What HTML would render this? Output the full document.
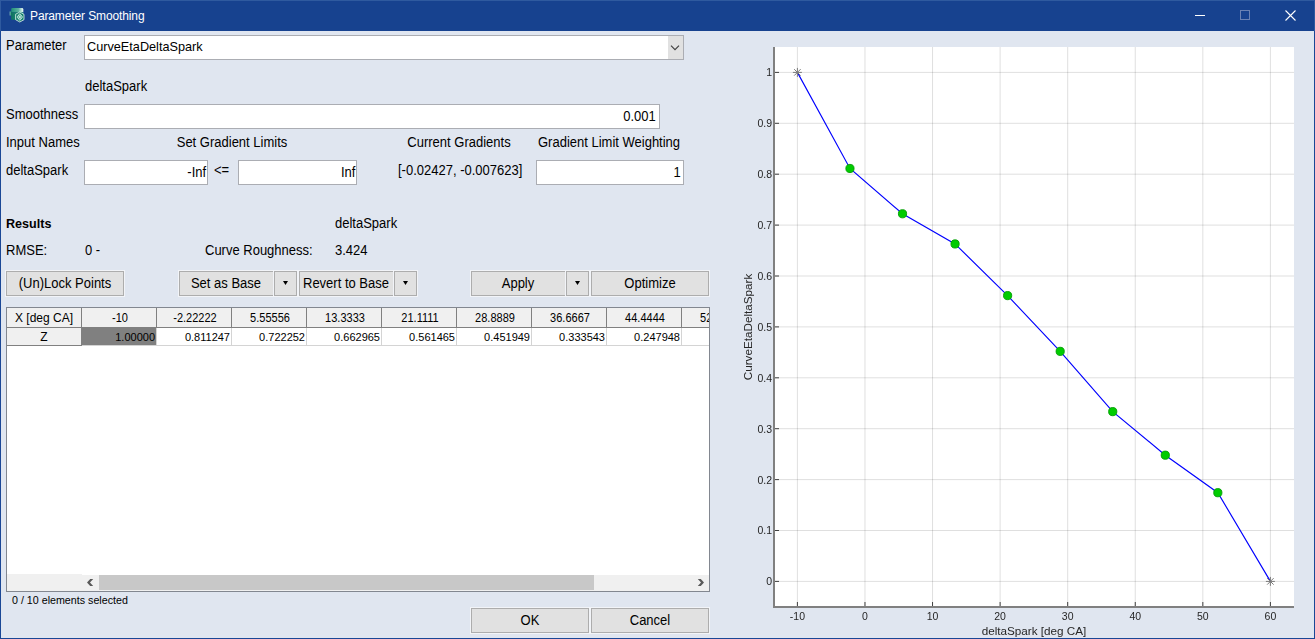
<!DOCTYPE html>
<html><head><meta charset="utf-8"><title>Parameter Smoothing</title>
<style>
html,body{margin:0;padding:0;width:1315px;height:639px;overflow:hidden;background:#e0e6f0;}
body{position:relative;font-family:"Liberation Sans", sans-serif;}
.b{position:absolute;box-sizing:content-box;}
.t{position:absolute;white-space:nowrap;font-family:"Liberation Sans", sans-serif;}
</style></head><body>
<div class="b" style="left:0px;top:0px;width:1315px;height:31px;background:#17428f;"></div>
<div class="b" style="left:0px;top:31px;width:1315px;height:608px;background:#e0e6f0;"></div>
<div class="b" style="left:0px;top:0px;width:1px;height:639px;background:#1a4796;"></div>
<div class="b" style="left:1314px;top:0px;width:1px;height:639px;background:#1a4796;"></div>
<div class="b" style="left:0px;top:638px;width:1315px;height:1px;background:#1a4796;"></div>
<div class="b" style="left:0px;top:0px;width:1315px;height:1px;background:#2f5a9f;"></div>
<div class="b" style="left:0px;top:0px;width:1px;height:31px;background:#2f5a9f;"></div>
<div class="b" style="left:1314px;top:0px;width:1px;height:31px;background:#2f5a9f;"></div>
<svg class="b" style="left:9px;top:7px" width="17" height="17" viewBox="0 0 17 17">
<defs>
<linearGradient id="g1" x1="0" y1="0" x2="1" y2="0"><stop offset="0" stop-color="#1f8f78"/><stop offset="0.6" stop-color="#5fb3a0"/><stop offset="1" stop-color="#f2fbf8"/></linearGradient>
<linearGradient id="g2" x1="0" y1="0" x2="1" y2="0"><stop offset="0" stop-color="#0c6f5c"/><stop offset="1" stop-color="#2a9a84"/></linearGradient>
</defs>
<path d="M2.2 2 Q2.2 1 3.4 1 L13 1 Q14.3 1 14.3 2.3 L14.3 5.2 L2.2 5.2 Z" fill="url(#g1)"/>
<path d="M2.2 5.2 L14.3 5.2 L14.3 12.7 L2.2 12.7 L2.2 8.5 L1.1 8.5 L1.1 4.3 L2.2 4.3 Z" fill="url(#g2)"/>
<path d="M1.1 4.5 L1.1 8.5" stroke="#8fd1c2" stroke-width="0.8"/>
<polygon points="10.8,5 15,7.3 15,12.7 10.8,15 6.6,12.7 6.6,7.3" fill="#18836d" stroke="#eef8f5" stroke-width="0.75"/>
<polygon points="10.8,6.6 13.6,10 10.8,13.4 8,10" fill="#5fb5a2" stroke="#f4fbf9" stroke-width="0.6"/>
<path d="M9.4 8.3 L12.2 11.7 M12.2 8.3 L9.4 11.7" stroke="#f4fbf9" stroke-width="0.6"/>
</svg>
<div class="t" style="left:30px;top:9.34px;font-size:12.00px;line-height:15px;color:#fff;font-weight:normal;transform-origin:0 0;letter-spacing:-0.12px;">Parameter Smoothing</div>
<div class="b" style="left:1195px;top:15px;width:10px;height:1px;background:#fff;"></div>
<div class="b" style="left:1240px;top:10px;width:8px;height:8px;border:1px solid #6a82b4;"></div>
<svg class="b" style="left:1285px;top:10px" width="11" height="11" viewBox="0 0 11 11"><path d="M0.5 0.5 L10.5 10.5 M10.5 0.5 L0.5 10.5" stroke="#fff" stroke-width="1.1"/></svg>
<div class="t" style="left:6px;top:36.68px;font-size:13.91px;line-height:17px;color:#000;font-weight:normal;transform:scaleX(0.9346);transform-origin:0 0;">Parameter</div>
<div class="b" style="left:84px;top:35px;width:598px;height:23px;background:#fff;border:1px solid #abadb3;"></div>
<div class="b" style="left:668px;top:36px;width:15px;height:23px;background:#e1e1e1;"></div>
<svg class="b" style="left:670px;top:44px" width="10" height="8" viewBox="0 0 10 8"><path d="M1 1.6 L5 5.6 L9 1.6" fill="none" stroke="#404040" stroke-width="1.15"/></svg>
<div class="t" style="left:87px;top:38.29px;font-size:13.59px;line-height:17px;color:#000;font-weight:normal;transform:scaleX(0.9346);transform-origin:0 0;">CurveEtaDeltaSpark</div>
<div class="t" style="left:85px;top:77.68px;font-size:13.91px;line-height:17px;color:#000;font-weight:normal;transform:scaleX(0.9346);transform-origin:0 0;">deltaSpark</div>
<div class="t" style="left:6px;top:105.68px;font-size:13.91px;line-height:17px;color:#000;font-weight:normal;transform:scaleX(0.9346);transform-origin:0 0;">Smoothness</div>
<div class="b" style="left:84px;top:104px;width:574px;height:23px;background:#fff;border:1px solid #abadb3;"></div>
<div class="t" style="right:659px;top:107.68px;font-size:13.91px;line-height:17px;color:#000;font-weight:normal;transform:scaleX(0.9346);transform-origin:100% 0;">0.001</div>
<div class="t" style="left:6px;top:133.68px;font-size:13.91px;line-height:17px;color:#000;font-weight:normal;transform:scaleX(0.9346);transform-origin:0 0;">Input Names</div>
<div class="t" style="left:32px;width:400px;text-align:center;top:133.68px;font-size:13.91px;line-height:17px;color:#000;font-weight:normal;transform:scaleX(0.9346);transform-origin:50% 0;">Set Gradient Limits</div>
<div class="t" style="left:259px;width:400px;text-align:center;top:133.68px;font-size:13.91px;line-height:17px;color:#000;font-weight:normal;transform:scaleX(0.9346);transform-origin:50% 0;">Current Gradients</div>
<div class="t" style="left:538px;top:133.68px;font-size:13.91px;line-height:17px;color:#000;font-weight:normal;transform:scaleX(0.9346);transform-origin:0 0;">Gradient Limit Weighting</div>
<div class="t" style="left:6px;top:161.68px;font-size:13.91px;line-height:17px;color:#000;font-weight:normal;transform:scaleX(0.9346);transform-origin:0 0;">deltaSpark</div>
<div class="b" style="left:84px;top:160px;width:122px;height:23px;background:#fff;border:1px solid #abadb3;"></div>
<div class="t" style="right:1109px;top:163.68px;font-size:13.91px;line-height:17px;color:#000;font-weight:normal;transform:scaleX(0.9346);transform-origin:100% 0;">-Inf</div>
<div class="t" style="left:214px;top:161.68px;font-size:13.91px;line-height:17px;color:#000;font-weight:normal;transform:scaleX(0.9346);transform-origin:0 0;">&lt;=</div>
<div class="b" style="left:238px;top:160px;width:117px;height:23px;background:#fff;border:1px solid #abadb3;"></div>
<div class="t" style="right:960px;top:163.68px;font-size:13.91px;line-height:17px;color:#000;font-weight:normal;transform:scaleX(0.9346);transform-origin:100% 0;">Inf</div>
<div class="t" style="left:398px;top:161.68px;font-size:13.91px;line-height:17px;color:#000;font-weight:normal;transform:scaleX(0.9346);transform-origin:0 0;">[-0.02427, -0.007623]</div>
<div class="b" style="left:536px;top:160px;width:146px;height:23px;background:#fff;border:1px solid #abadb3;"></div>
<div class="t" style="right:634px;top:163.68px;font-size:13.91px;line-height:17px;color:#000;font-weight:normal;transform:scaleX(0.9346);transform-origin:100% 0;">1</div>
<div class="t" style="left:6px;top:214.83px;font-size:13.48px;line-height:17px;color:#000;font-weight:bold;transform:scaleX(0.9346);transform-origin:0 0;">Results</div>
<div class="t" style="left:335px;top:214.68px;font-size:13.91px;line-height:17px;color:#000;font-weight:normal;transform:scaleX(0.9346);transform-origin:0 0;">deltaSpark</div>
<div class="t" style="left:6px;top:241.68px;font-size:13.91px;line-height:17px;color:#000;font-weight:normal;transform:scaleX(0.9346);transform-origin:0 0;">RMSE:</div>
<div class="t" style="left:85px;top:241.68px;font-size:13.91px;line-height:17px;color:#000;font-weight:normal;transform:scaleX(0.9346);transform-origin:0 0;">0 -</div>
<div class="t" style="left:205px;top:241.68px;font-size:13.91px;line-height:17px;color:#000;font-weight:normal;transform:scaleX(0.9346);transform-origin:0 0;">Curve Roughness:</div>
<div class="t" style="left:335px;top:241.68px;font-size:13.91px;line-height:17px;color:#000;font-weight:normal;transform:scaleX(0.9346);transform-origin:0 0;">3.424</div>
<div class="b" style="left:6px;top:271px;width:116px;height:23px;background:#e1e1e1;border:1px solid #adadad;box-shadow:0 0 0 1px #f2f4f8;"></div>
<div class="t" style="left:-135.0px;width:400px;text-align:center;top:274.68px;font-size:13.91px;line-height:17px;color:#000;font-weight:normal;transform:scaleX(0.9346);transform-origin:50% 0;">(Un)Lock Points</div>
<div class="b" style="left:179px;top:271px;width:93px;height:23px;background:#e1e1e1;border:1px solid #adadad;border-right:0;box-shadow:0 0 0 1px #f2f4f8;"></div>
<div class="t" style="left:26.0px;width:400px;text-align:center;top:274.68px;font-size:13.91px;line-height:17px;color:#000;font-weight:normal;transform:scaleX(0.9346);transform-origin:50% 0;">Set as Base</div>
<div class="b" style="left:274px;top:271px;width:21px;height:23px;background:#e1e1e1;border:1px solid #adadad;box-shadow:0 0 0 1px #f2f4f8;"></div>
<svg class="b" style="left:283.0px;top:281.0px" width="5" height="4" viewBox="0 0 5 4"><path d="M0 0 L5 0 L2.5 4 Z" fill="#000"/></svg>
<div class="b" style="left:299px;top:271px;width:93px;height:23px;background:#e1e1e1;border:1px solid #adadad;border-right:0;box-shadow:0 0 0 1px #f2f4f8;"></div>
<div class="t" style="left:146.0px;width:400px;text-align:center;top:274.68px;font-size:13.91px;line-height:17px;color:#000;font-weight:normal;transform:scaleX(0.9346);transform-origin:50% 0;">Revert to Base</div>
<div class="b" style="left:394px;top:271px;width:21px;height:23px;background:#e1e1e1;border:1px solid #adadad;box-shadow:0 0 0 1px #f2f4f8;"></div>
<svg class="b" style="left:403.0px;top:281.0px" width="5" height="4" viewBox="0 0 5 4"><path d="M0 0 L5 0 L2.5 4 Z" fill="#000"/></svg>
<div class="b" style="left:471px;top:271px;width:93px;height:23px;background:#e1e1e1;border:1px solid #adadad;border-right:0;box-shadow:0 0 0 1px #f2f4f8;"></div>
<div class="t" style="left:318.0px;width:400px;text-align:center;top:274.68px;font-size:13.91px;line-height:17px;color:#000;font-weight:normal;transform:scaleX(0.9346);transform-origin:50% 0;">Apply</div>
<div class="b" style="left:566px;top:271px;width:21px;height:23px;background:#e1e1e1;border:1px solid #adadad;box-shadow:0 0 0 1px #f2f4f8;"></div>
<svg class="b" style="left:575.0px;top:281.0px" width="5" height="4" viewBox="0 0 5 4"><path d="M0 0 L5 0 L2.5 4 Z" fill="#000"/></svg>
<div class="b" style="left:591px;top:271px;width:116px;height:23px;background:#e1e1e1;border:1px solid #adadad;box-shadow:0 0 0 1px #f2f4f8;"></div>
<div class="t" style="left:450.0px;width:400px;text-align:center;top:274.68px;font-size:13.91px;line-height:17px;color:#000;font-weight:normal;transform:scaleX(0.9346);transform-origin:50% 0;">Optimize</div>
<div class="b" style="left:6px;top:307px;width:702px;height:283px;background:#fff;border:1px solid #828790;"></div>
<div class="b" style="left:7px;top:308px;width:702px;height:19px;background:#f0f0f0;"></div>
<div class="b" style="left:7px;top:327px;width:702px;height:1px;background:#808080;"></div>
<div class="b" style="left:7px;top:328px;width:74px;height:17px;background:#f0f0f0;"></div>
<div class="b" style="left:7px;top:345px;width:75px;height:1px;background:#808080;"></div>
<div class="b" style="left:81px;top:308px;width:1px;height:37px;background:#808080;"></div>
<div class="t" style="left:-156px;width:400px;text-align:center;top:311.34px;font-size:12.00px;line-height:15px;color:#000;font-weight:normal;transform-origin:50% 0;">X [deg CA]</div>
<div class="t" style="left:-156px;width:400px;text-align:center;top:330.34px;font-size:12.00px;line-height:15px;color:#000;font-weight:normal;transform-origin:50% 0;">Z</div>
<div class="b" style="left:7px;top:308px;width:702px;height:282px;overflow:hidden">
<div class="b" style="left:149px;top:0px;width:1px;height:19px;background:#808080"></div>
<div class="b" style="left:149px;top:20px;width:1px;height:17px;background:#d4d4d4"></div>
<div class="b" style="left:75px;top:37px;width:75px;height:1px;background:#d4d4d4"></div>
<div class="b" style="left:75px;top:20px;width:74px;height:17px;background:#808080"></div>
<div class="t" style="left:63px;width:100px;text-align:center;top:3.4000000000000004px;font-size:11.9px;line-height:15px;transform:scaleX(0.925);transform-origin:50% 0">-10</div>
<div class="t" style="left:74px;width:74px;text-align:right;top:21.5px;font-size:11px;line-height:14px">1.00000</div>
<div class="b" style="left:224px;top:0px;width:1px;height:19px;background:#808080"></div>
<div class="b" style="left:224px;top:20px;width:1px;height:17px;background:#d4d4d4"></div>
<div class="b" style="left:150px;top:37px;width:75px;height:1px;background:#d4d4d4"></div>
<div class="t" style="left:138px;width:100px;text-align:center;top:3.4000000000000004px;font-size:11.9px;line-height:15px;transform:scaleX(0.925);transform-origin:50% 0">-2.22222</div>
<div class="t" style="left:149px;width:74px;text-align:right;top:21.5px;font-size:11px;line-height:14px">0.811247</div>
<div class="b" style="left:299px;top:0px;width:1px;height:19px;background:#808080"></div>
<div class="b" style="left:299px;top:20px;width:1px;height:17px;background:#d4d4d4"></div>
<div class="b" style="left:225px;top:37px;width:75px;height:1px;background:#d4d4d4"></div>
<div class="t" style="left:213px;width:100px;text-align:center;top:3.4000000000000004px;font-size:11.9px;line-height:15px;transform:scaleX(0.925);transform-origin:50% 0">5.55556</div>
<div class="t" style="left:224px;width:74px;text-align:right;top:21.5px;font-size:11px;line-height:14px">0.722252</div>
<div class="b" style="left:374px;top:0px;width:1px;height:19px;background:#808080"></div>
<div class="b" style="left:374px;top:20px;width:1px;height:17px;background:#d4d4d4"></div>
<div class="b" style="left:300px;top:37px;width:75px;height:1px;background:#d4d4d4"></div>
<div class="t" style="left:288px;width:100px;text-align:center;top:3.4000000000000004px;font-size:11.9px;line-height:15px;transform:scaleX(0.925);transform-origin:50% 0">13.3333</div>
<div class="t" style="left:299px;width:74px;text-align:right;top:21.5px;font-size:11px;line-height:14px">0.662965</div>
<div class="b" style="left:449px;top:0px;width:1px;height:19px;background:#808080"></div>
<div class="b" style="left:449px;top:20px;width:1px;height:17px;background:#d4d4d4"></div>
<div class="b" style="left:375px;top:37px;width:75px;height:1px;background:#d4d4d4"></div>
<div class="t" style="left:363px;width:100px;text-align:center;top:3.4000000000000004px;font-size:11.9px;line-height:15px;transform:scaleX(0.925);transform-origin:50% 0">21.1111</div>
<div class="t" style="left:374px;width:74px;text-align:right;top:21.5px;font-size:11px;line-height:14px">0.561465</div>
<div class="b" style="left:524px;top:0px;width:1px;height:19px;background:#808080"></div>
<div class="b" style="left:524px;top:20px;width:1px;height:17px;background:#d4d4d4"></div>
<div class="b" style="left:450px;top:37px;width:75px;height:1px;background:#d4d4d4"></div>
<div class="t" style="left:438px;width:100px;text-align:center;top:3.4000000000000004px;font-size:11.9px;line-height:15px;transform:scaleX(0.925);transform-origin:50% 0">28.8889</div>
<div class="t" style="left:449px;width:74px;text-align:right;top:21.5px;font-size:11px;line-height:14px">0.451949</div>
<div class="b" style="left:599px;top:0px;width:1px;height:19px;background:#808080"></div>
<div class="b" style="left:599px;top:20px;width:1px;height:17px;background:#d4d4d4"></div>
<div class="b" style="left:525px;top:37px;width:75px;height:1px;background:#d4d4d4"></div>
<div class="t" style="left:513px;width:100px;text-align:center;top:3.4000000000000004px;font-size:11.9px;line-height:15px;transform:scaleX(0.925);transform-origin:50% 0">36.6667</div>
<div class="t" style="left:524px;width:74px;text-align:right;top:21.5px;font-size:11px;line-height:14px">0.333543</div>
<div class="b" style="left:674px;top:0px;width:1px;height:19px;background:#808080"></div>
<div class="b" style="left:674px;top:20px;width:1px;height:17px;background:#d4d4d4"></div>
<div class="b" style="left:600px;top:37px;width:75px;height:1px;background:#d4d4d4"></div>
<div class="t" style="left:588px;width:100px;text-align:center;top:3.4000000000000004px;font-size:11.9px;line-height:15px;transform:scaleX(0.925);transform-origin:50% 0">44.4444</div>
<div class="t" style="left:599px;width:74px;text-align:right;top:21.5px;font-size:11px;line-height:14px">0.247948</div>
<div class="b" style="left:749px;top:0px;width:1px;height:19px;background:#808080"></div>
<div class="b" style="left:749px;top:20px;width:1px;height:17px;background:#d4d4d4"></div>
<div class="b" style="left:675px;top:37px;width:75px;height:1px;background:#d4d4d4"></div>
<div class="t" style="left:663px;width:100px;text-align:center;top:3.4000000000000004px;font-size:11.9px;line-height:15px;transform:scaleX(0.925);transform-origin:50% 0">52.2222</div>
<div class="t" style="left:674px;width:74px;text-align:right;top:21.5px;font-size:11px;line-height:14px">0.174311</div>
</div>
<div class="b" style="left:7px;top:574px;width:75px;height:17px;background:#f0f0f0;"></div>
<div class="b" style="left:82px;top:575px;width:627px;height:16px;background:#f0f0f0;"></div>
<div class="b" style="left:99px;top:575px;width:495px;height:15px;background:#c8c8c8;"></div>
<svg class="b" style="left:86px;top:578px" width="8" height="9" viewBox="0 0 8 9"><polygon points="7.2,1 4.2,1 1,4.5 4.2,8 7.2,8 4,4.5" fill="#5a5a5a"/></svg>
<svg class="b" style="left:697px;top:578px" width="8" height="9" viewBox="0 0 8 9"><polygon points="0.8,1 3.8,1 7,4.5 3.8,8 0.8,8 4,4.5" fill="#5a5a5a"/></svg>
<div class="t" style="left:12px;top:593.79px;font-size:10.70px;line-height:13px;color:#000;font-weight:normal;transform-origin:0 0;">0 / 10 elements selected</div>
<div class="b" style="left:471px;top:608px;width:116px;height:23px;background:#e1e1e1;border:1px solid #adadad;box-shadow:0 0 0 1px #f2f4f8;"></div>
<div class="t" style="left:330.0px;width:400px;text-align:center;top:611.68px;font-size:13.91px;line-height:17px;color:#000;font-weight:normal;transform:scaleX(0.9346);transform-origin:50% 0;">OK</div>
<div class="b" style="left:591px;top:608px;width:116px;height:23px;background:#e1e1e1;border:1px solid #adadad;box-shadow:0 0 0 1px #f2f4f8;"></div>
<div class="t" style="left:450.0px;width:400px;text-align:center;top:611.68px;font-size:13.91px;line-height:17px;color:#000;font-weight:normal;transform:scaleX(0.9346);transform-origin:50% 0;">Cancel</div>
<svg class="b" style="left:0;top:0;will-change:transform" width="1315" height="639" viewBox="0 0 1315 639">
<rect x="775" y="47" width="519" height="559" fill="#fff"/>
<line x1="797.4" y1="47" x2="797.4" y2="606" stroke="#000" stroke-opacity="0.125" stroke-width="1"/>
<line x1="864.97" y1="47" x2="864.97" y2="606" stroke="#000" stroke-opacity="0.125" stroke-width="1"/>
<line x1="932.54" y1="47" x2="932.54" y2="606" stroke="#000" stroke-opacity="0.125" stroke-width="1"/>
<line x1="1000.11" y1="47" x2="1000.11" y2="606" stroke="#000" stroke-opacity="0.125" stroke-width="1"/>
<line x1="1067.69" y1="47" x2="1067.69" y2="606" stroke="#000" stroke-opacity="0.125" stroke-width="1"/>
<line x1="1135.26" y1="47" x2="1135.26" y2="606" stroke="#000" stroke-opacity="0.125" stroke-width="1"/>
<line x1="1202.83" y1="47" x2="1202.83" y2="606" stroke="#000" stroke-opacity="0.125" stroke-width="1"/>
<line x1="1270.4" y1="47" x2="1270.4" y2="606" stroke="#000" stroke-opacity="0.125" stroke-width="1"/>
<line x1="775" y1="581.4" x2="1294" y2="581.4" stroke="#000" stroke-opacity="0.125" stroke-width="1"/>
<line x1="775" y1="530.5" x2="1294" y2="530.5" stroke="#000" stroke-opacity="0.125" stroke-width="1"/>
<line x1="775" y1="479.6" x2="1294" y2="479.6" stroke="#000" stroke-opacity="0.125" stroke-width="1"/>
<line x1="775" y1="428.7" x2="1294" y2="428.7" stroke="#000" stroke-opacity="0.125" stroke-width="1"/>
<line x1="775" y1="377.8" x2="1294" y2="377.8" stroke="#000" stroke-opacity="0.125" stroke-width="1"/>
<line x1="775" y1="326.9" x2="1294" y2="326.9" stroke="#000" stroke-opacity="0.125" stroke-width="1"/>
<line x1="775" y1="276.0" x2="1294" y2="276.0" stroke="#000" stroke-opacity="0.125" stroke-width="1"/>
<line x1="775" y1="225.1" x2="1294" y2="225.1" stroke="#000" stroke-opacity="0.125" stroke-width="1"/>
<line x1="775" y1="174.2" x2="1294" y2="174.2" stroke="#000" stroke-opacity="0.125" stroke-width="1"/>
<line x1="775" y1="123.3" x2="1294" y2="123.3" stroke="#000" stroke-opacity="0.125" stroke-width="1"/>
<line x1="775" y1="72.4" x2="1294" y2="72.4" stroke="#000" stroke-opacity="0.125" stroke-width="1"/>
<rect x="773" y="47" width="2" height="561" fill="#808080"/>
<rect x="773" y="606" width="521" height="2" fill="#808080"/>
<line x1="797.4" y1="602" x2="797.4" y2="606" stroke="#404040" stroke-width="1"/>
<text x="797.4" y="620" font-size="10.5" fill="#262626" text-anchor="middle" font-family="Liberation Sans">-10</text>
<line x1="864.97" y1="602" x2="864.97" y2="606" stroke="#404040" stroke-width="1"/>
<text x="864.97" y="620" font-size="10.5" fill="#262626" text-anchor="middle" font-family="Liberation Sans">0</text>
<line x1="932.54" y1="602" x2="932.54" y2="606" stroke="#404040" stroke-width="1"/>
<text x="932.54" y="620" font-size="10.5" fill="#262626" text-anchor="middle" font-family="Liberation Sans">10</text>
<line x1="1000.11" y1="602" x2="1000.11" y2="606" stroke="#404040" stroke-width="1"/>
<text x="1000.11" y="620" font-size="10.5" fill="#262626" text-anchor="middle" font-family="Liberation Sans">20</text>
<line x1="1067.69" y1="602" x2="1067.69" y2="606" stroke="#404040" stroke-width="1"/>
<text x="1067.69" y="620" font-size="10.5" fill="#262626" text-anchor="middle" font-family="Liberation Sans">30</text>
<line x1="1135.26" y1="602" x2="1135.26" y2="606" stroke="#404040" stroke-width="1"/>
<text x="1135.26" y="620" font-size="10.5" fill="#262626" text-anchor="middle" font-family="Liberation Sans">40</text>
<line x1="1202.83" y1="602" x2="1202.83" y2="606" stroke="#404040" stroke-width="1"/>
<text x="1202.83" y="620" font-size="10.5" fill="#262626" text-anchor="middle" font-family="Liberation Sans">50</text>
<line x1="1270.4" y1="602" x2="1270.4" y2="606" stroke="#404040" stroke-width="1"/>
<text x="1270.4" y="620" font-size="10.5" fill="#262626" text-anchor="middle" font-family="Liberation Sans">60</text>
<line x1="775" y1="581.4" x2="779" y2="581.4" stroke="#404040" stroke-width="1"/>
<text x="772" y="585.30" font-size="10.5" fill="#262626" text-anchor="end" font-family="Liberation Sans">0</text>
<line x1="775" y1="530.5" x2="779" y2="530.5" stroke="#404040" stroke-width="1"/>
<text x="772" y="534.40" font-size="10.5" fill="#262626" text-anchor="end" font-family="Liberation Sans">0.1</text>
<line x1="775" y1="479.6" x2="779" y2="479.6" stroke="#404040" stroke-width="1"/>
<text x="772" y="483.50" font-size="10.5" fill="#262626" text-anchor="end" font-family="Liberation Sans">0.2</text>
<line x1="775" y1="428.7" x2="779" y2="428.7" stroke="#404040" stroke-width="1"/>
<text x="772" y="432.60" font-size="10.5" fill="#262626" text-anchor="end" font-family="Liberation Sans">0.3</text>
<line x1="775" y1="377.8" x2="779" y2="377.8" stroke="#404040" stroke-width="1"/>
<text x="772" y="381.70" font-size="10.5" fill="#262626" text-anchor="end" font-family="Liberation Sans">0.4</text>
<line x1="775" y1="326.9" x2="779" y2="326.9" stroke="#404040" stroke-width="1"/>
<text x="772" y="330.80" font-size="10.5" fill="#262626" text-anchor="end" font-family="Liberation Sans">0.5</text>
<line x1="775" y1="276.0" x2="779" y2="276.0" stroke="#404040" stroke-width="1"/>
<text x="772" y="279.90" font-size="10.5" fill="#262626" text-anchor="end" font-family="Liberation Sans">0.6</text>
<line x1="775" y1="225.1" x2="779" y2="225.1" stroke="#404040" stroke-width="1"/>
<text x="772" y="229.00" font-size="10.5" fill="#262626" text-anchor="end" font-family="Liberation Sans">0.7</text>
<line x1="775" y1="174.2" x2="779" y2="174.2" stroke="#404040" stroke-width="1"/>
<text x="772" y="178.10" font-size="10.5" fill="#262626" text-anchor="end" font-family="Liberation Sans">0.8</text>
<line x1="775" y1="123.3" x2="779" y2="123.3" stroke="#404040" stroke-width="1"/>
<text x="772" y="127.20" font-size="10.5" fill="#262626" text-anchor="end" font-family="Liberation Sans">0.9</text>
<line x1="775" y1="72.4" x2="779" y2="72.4" stroke="#404040" stroke-width="1"/>
<text x="772" y="76.30" font-size="10.5" fill="#262626" text-anchor="end" font-family="Liberation Sans">1</text>
<text x="1034" y="634.5" font-size="11.7" fill="#262626" text-anchor="middle" font-family="Liberation Sans">deltaSpark [deg CA]</text>
<text transform="translate(752,327) rotate(-90)" x="0" y="0" font-size="11.7" fill="#262626" text-anchor="middle" font-family="Liberation Sans">CurveEtaDeltaSpark</text>
<polyline points="797.40,72.40 849.96,168.48 902.51,213.77 955.07,243.95 1007.62,295.61 1060.18,351.36 1112.73,411.63 1165.29,455.19 1217.84,492.71 1270.40,581.40" fill="none" stroke="#0000ff" stroke-width="1.15"/>
<circle cx="849.96" cy="168.48" r="4.1" fill="#00cc00" stroke="#009c00" stroke-width="0.9"/>
<circle cx="902.51" cy="213.77" r="4.1" fill="#00cc00" stroke="#009c00" stroke-width="0.9"/>
<circle cx="955.07" cy="243.95" r="4.1" fill="#00cc00" stroke="#009c00" stroke-width="0.9"/>
<circle cx="1007.62" cy="295.61" r="4.1" fill="#00cc00" stroke="#009c00" stroke-width="0.9"/>
<circle cx="1060.18" cy="351.36" r="4.1" fill="#00cc00" stroke="#009c00" stroke-width="0.9"/>
<circle cx="1112.73" cy="411.63" r="4.1" fill="#00cc00" stroke="#009c00" stroke-width="0.9"/>
<circle cx="1165.29" cy="455.19" r="4.1" fill="#00cc00" stroke="#009c00" stroke-width="0.9"/>
<circle cx="1217.84" cy="492.71" r="4.1" fill="#00cc00" stroke="#009c00" stroke-width="0.9"/>
<path d="M792.9,72.39999999999998 L801.9,72.39999999999998 M797.4,67.89999999999998 L797.4,76.89999999999998 M794.16,69.15999999999998 L800.64,75.63999999999997 M794.16,75.63999999999997 L800.64,69.15999999999998" stroke="#7a7a7a" stroke-width="1"/>
<path d="M1265.9,581.4 L1274.9,581.4 M1270.4,576.9 L1270.4,585.9 M1267.16,578.16 L1273.64,584.64 M1267.16,584.64 L1273.64,578.16" stroke="#7a7a7a" stroke-width="1"/>
</svg>
</body></html>
